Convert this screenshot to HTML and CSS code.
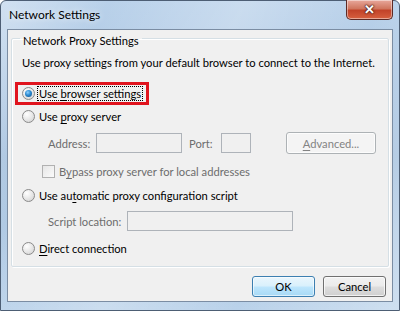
FILE: index.html
```html
<!DOCTYPE html>
<html lang="en">
<head>
  <meta charset="UTF-8">
  <title>Network Settings</title>
  <link rel="stylesheet" href="styles.css">
</head>
<body>
  <div class="window">
    <div class="titlebar">
      <span class="title">Network Settings</span>
      <button class="close-btn">&#x2715;</button>
    </div>

    <div class="client">
      <fieldset class="group">
        <legend>Network Proxy Settings</legend>

        <div class="row intro">Use proxy settings from your default browser to connect to the Internet.</div>

        <div class="row r1">
          <div class="highlight">
            <span class="radio checked"></span>
            <span class="label focus">Use <u>b</u>rowser settings</span>
          </div>
        </div>

        <div class="row r2">
          <span class="radio"></span>
          <span class="label">Use <u>p</u>roxy server</span>
        </div>

        <div class="row addr">
          <span class="field-label disabled addr-label">Address:</span>
          <span class="textbox address"></span>
          <span class="field-label disabled port-label">Port:</span>
          <span class="textbox port"></span>
          <button class="btn adv" disabled><u>A</u>dvanced...</button>
        </div>

        <div class="row cb">
          <span class="checkbox"></span>
          <span class="label disabled">B<u>y</u>pass proxy server for local addresses</span>
        </div>

        <div class="row r3">
          <span class="radio"></span>
          <span class="label">Use au<u>t</u>omatic proxy configuration script</span>
        </div>

        <div class="row script">
          <span class="field-label disabled script-label">Script location:</span>
          <span class="textbox location"></span>
        </div>

        <div class="row r4">
          <span class="radio"></span>
          <span class="label"><u>D</u>irect connection</span>
        </div>
      </fieldset>

      <div class="buttons">
        <button class="btn ok">OK</button>
        <button class="btn">Cancel</button>
      </div>
    </div>
  </div>
</body>
</html>
```

FILE: styles.css
```css
* {
  box-sizing: border-box;
}
html, body {
  margin: 0;
  padding: 0;
}
body {
  width: 400px;
  height: 311px;
  overflow: hidden;
  font-family: Lato, 'Liberation Sans', sans-serif;
  font-size: 11.2px;
  color: #000;
}
u {
  text-decoration: underline;
  text-underline-offset: 2px;
}

/* window frame */
.window {
  width: 400px;
  height: 311px;
  border: 1px solid #4d5e74;
  border-radius: 6px 6px 0 0;
  padding: 0 6px 8px 6px;
  display: flex;
  flex-direction: column;
  background:
    linear-gradient(115deg, rgba(255,255,255,0.35) 0%, rgba(255,255,255,0) 20%, rgba(255,255,255,0.25) 45%, rgba(255,255,255,0) 70%, rgba(255,255,255,0.3) 100%),
    linear-gradient(180deg, #b9d1ea 0%, #a8c3df 50%, #bad2ea 100%);
}
.titlebar {
  height: 28px;
  display: flex;
  align-items: flex-start;
  position: relative;
}
.title {
  padding: 6px 0 0 2px;
  font-size: 12px;
  color: #000;
  text-shadow: 0 0 6px rgba(255,255,255,0.9);
}
.close-btn {
  position: absolute;
  right: 0;
  top: -1px;
  width: 47px;
  height: 20px;
  border: 1px solid #5d2a25;
  border-top: none;
  border-radius: 0 0 5px 5px;
  background: linear-gradient(180deg, #e8a89c 0%, #d0765f 45%, #c24329 55%, #d7603f 100%);
  box-shadow: inset 0 0 0 1px rgba(255,255,255,0.45);
  color: #fff;
  font-size: 13px;
  font-weight: bold;
  line-height: 18px;
  padding: 0;
  text-shadow: 0 0 1px #4a1f1a, 0 0 2px #4a1f1a, 0 0 2px #4a1f1a;
}

/* client area */
.client {
  flex: 1;
  background: #f0f0f0;
  border: 1px solid #7b8da3;
  padding: 0 3px;
  display: flex;
  flex-direction: column;
}
.group {
  margin: 0;
  padding: 0 0 7px 0;
  border: 1px solid #d5dfe5;
  box-shadow: inset 1px 1px 0 #fff, 1px 1px 0 #fff;
  border-radius: 2px;
}
.group legend {
  margin-left: 8px;
  padding: 4px 3px 0 3px;
  line-height: 14px;
  height: 17px;
}
.row {
  display: flex;
  align-items: center;
  height: 22px;
  padding-left: 10px;
}
.intro { margin-top: 4px; }
.r1 { margin-top: 9px; padding-left: 3px; }
.r2 { margin-top: 1px; }
.addr { margin-top: 5px; padding-left: 36px; }
.cb { margin-top: 6px; padding-left: 30px; }
.r3 { margin-top: 2px; }
.script { margin-top: 4px; padding-left: 36px; }
.r4 { margin-top: 5px; }

.highlight {
  display: flex;
  align-items: center;
  height: 23px;
  width: 134px;
  border: 3px solid #e0141e;
  padding-left: 4px;
}

.radio {
  width: 13px;
  height: 13px;
  border-radius: 50%;
  border: 1px solid #8a8a8a;
  background: radial-gradient(circle at 35% 30%, #ffffff 0%, #eaeaea 45%, #cfcfcf 100%);
  flex: none;
  display: flex;
  align-items: center;
  justify-content: center;
}
.radio.checked::after {
  content: "";
  width: 7px;
  height: 7px;
  border-radius: 50%;
  background: radial-gradient(circle at 40% 35%, #8fd0ff 0%, #2b8ad0 45%, #0d4a86 100%);
}
.label {
  margin-left: 4px;
  white-space: nowrap;
}
.label.focus {
  outline: 1px dotted #000;
  outline-offset: 0;
  padding: 0 1px;
  margin-left: 3px;
}
.disabled {
  color: #6d6d6d;
}
.field-label {
  white-space: nowrap;
  flex: none;
}
.addr-label { width: 48px; }
.port-label { width: 32px; margin-left: 7px; }
.script-label { width: 79px; }
.textbox {
  height: 20px;
  border: 1px solid #aeb3b9;
  background: #f0f0f0;
  flex: none;
}
.address { width: 86px; }
.port { width: 30px; }
.location { width: 166px; }

.checkbox {
  width: 13px;
  height: 13px;
  border: 1px solid #b1b1b1;
  background: linear-gradient(135deg, #e6e6e6, #fbfbfb);
  flex: none;
}

.btn {
  font-family: Lato, 'Liberation Sans', sans-serif;
  font-size: 11.2px;
  height: 21px;
  border: 1px solid #707070;
  border-radius: 3px;
  background: linear-gradient(180deg, #f2f2f2 0%, #ebebeb 48%, #dddddd 52%, #cfcfcf 100%);
  box-shadow: inset 0 0 0 1px rgba(255,255,255,0.7);
  color: #000;
  padding: 0;
  line-height: 17px;
}
.btn.adv {
  margin-left: auto;
  margin-right: 12px;
  width: 90px;
  height: 22px;
  border-color: #adb2b5;
  background: #f4f4f4;
  color: #838383;
  box-shadow: inset 0 0 0 1px #fcfcfc;
}
.buttons {
  display: flex;
  justify-content: flex-end;
  gap: 8px;
  margin-top: 9px;
  padding-right: 3px;
}
.buttons .btn {
  width: 63px;
}
.btn.ok {
  border-color: #3c7fb1;
  background: linear-gradient(180deg, #eaf6fd 0%, #d9f0fc 48%, #bee6fd 52%, #a7d9f5 100%);
  box-shadow: inset 0 0 0 1px rgba(255,255,255,0.6);
}
```
